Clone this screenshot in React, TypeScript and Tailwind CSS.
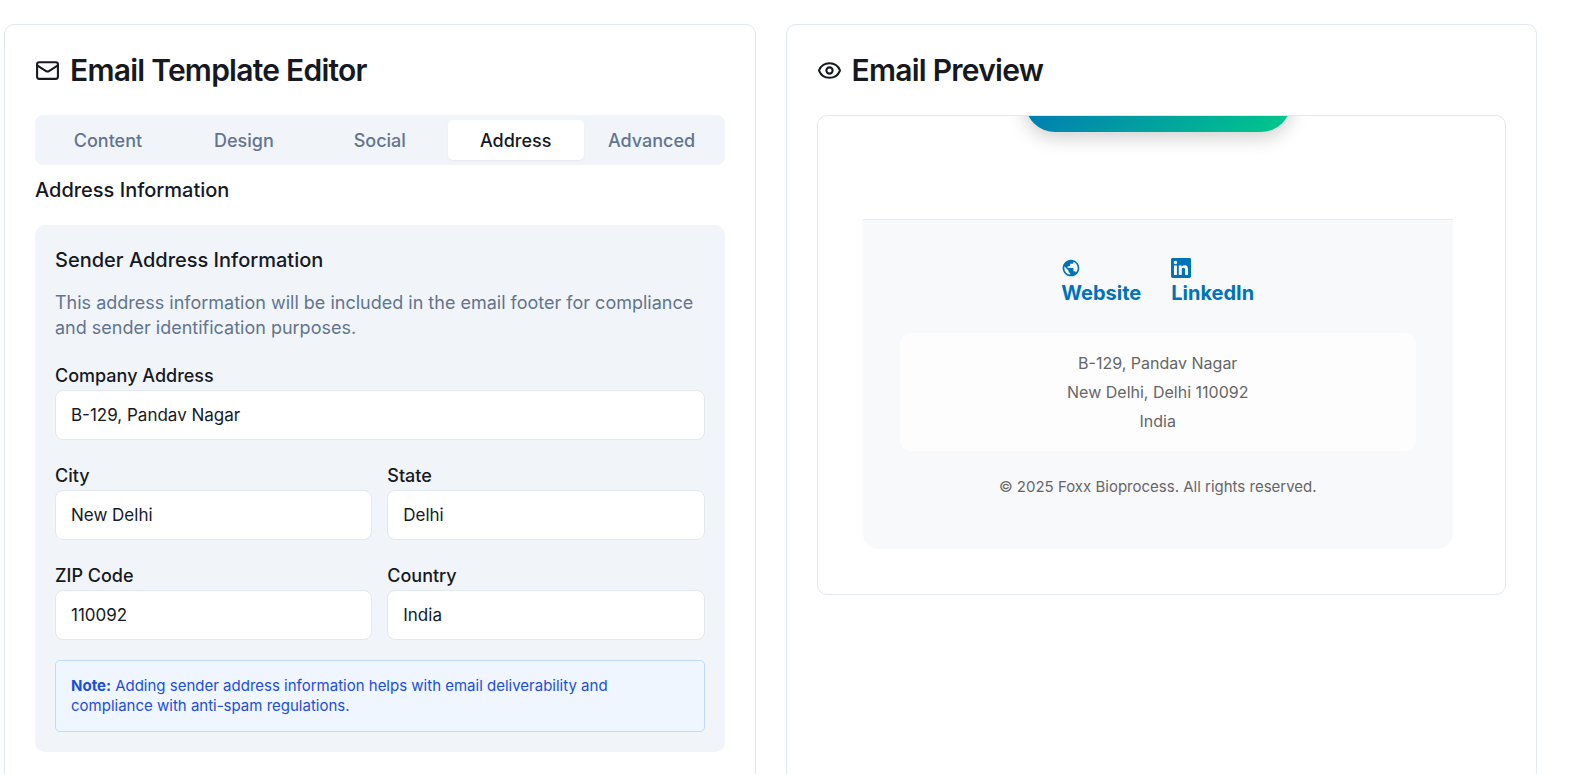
import { useState } from "react";
import type { ReactNode } from "react";
import { Eye, Mail } from "lucide-react";
import { MdPublic } from "react-icons/md";

const tabs = ["Content", "Design", "Social", "Address", "Advanced"];

function Card({ title, icon, children }: { title: string; icon: ReactNode; children: ReactNode }) {
  return (
    <section className="min-w-0 rounded-[10px] border border-slate-200 bg-white p-[30px]">
      <h2 className="mb-[30px] flex items-center gap-[10px] text-3xl leading-[30px] font-semibold tracking-tight">
        {icon}
        {title}
      </h2>
      {children}
    </section>
  );
}

function Field({ id, label, value }: { id: string; label: string; value: string }) {
  return (
    <div className="flex flex-col">
      <label htmlFor={id} className="pt-0.5 text-lg leading-7 font-medium">
        {label}
      </label>
      <input
        id={id}
        defaultValue={value}
        className="h-[50px] w-full rounded-lg border border-slate-200 bg-white px-[15px] text-[17px]"
      />
    </div>
  );
}

function LinkedInLogo() {
  return (
    <svg viewBox="0 0 24 24" className="size-5" fill="currentColor" aria-hidden="true">
      <path d="M20.447 20.452h-3.554v-5.569c0-1.328-.027-3.037-1.852-3.037-1.853 0-2.136 1.445-2.136 2.939v5.667H9.351V9h3.414v1.561h.046c.477-.9 1.637-1.85 3.37-1.85 3.601 0 4.267 2.37 4.267 5.455v6.286zM5.337 7.433a2.062 2.062 0 0 1-2.063-2.065 2.064 2.064 0 1 1 2.063 2.065zm1.782 13.019H3.555V9h3.564v11.452zM22.225 0H1.771C.792 0 0 .774 0 1.729v20.542C0 23.227.792 24 1.771 24h20.451C23.2 24 24 23.227 24 22.271V1.729C24 .774 23.2 0 22.222 0h.003z" />
    </svg>
  );
}

export default function App() {
  const [active, setActive] = useState("Address");

  return (
    <main className="grid min-h-screen grid-cols-2 gap-[30px] bg-white pt-6 pr-9 pb-6 pl-1 font-['Inter',sans-serif] text-[#16191f]">
      <Card title="Email Template Editor" icon={<Mail className="size-[25px]" />}>
        <div role="tablist" className="grid grid-cols-5 rounded-lg bg-slate-100 p-[5px]">
          {tabs.map((tab) => (
            <button
              key={tab}
              role="tab"
              aria-selected={tab === active}
              onClick={() => setActive(tab)}
              className={
                tab === active
                  ? "h-10 rounded-[5px] bg-white pt-0.5 text-lg font-medium shadow-xs"
                  : "h-10 rounded-[5px] pt-0.5 text-lg font-medium text-slate-500"
              }
            >
              {tab}
            </button>
          ))}
        </div>

        <h3 className="mt-[10px] mb-5 text-xl leading-[30px] font-medium">Address Information</h3>

        <div className="flex flex-col gap-5 rounded-[10px] bg-slate-100 p-5">
          <div>
            <h4 className="mb-[15px] text-xl leading-[30px] font-medium">Sender Address Information</h4>
            <p className="text-lg leading-[25px] text-slate-500">
              This address information will be included in the email footer for compliance and sender identification
              purposes.
            </p>
          </div>
          <Field id="company-address" label="Company Address" value="B-129, Pandav Nagar" />
          <div className="grid grid-cols-2 gap-x-[15px] gap-y-5">
            <Field id="city" label="City" value="New Delhi" />
            <Field id="state" label="State" value="Delhi" />
            <Field id="zip" label="ZIP Code" value="110092" />
            <Field id="country" label="Country" value="India" />
          </div>
          <p className="rounded-[5px] border border-[#bfdbfe] bg-[#eff6ff] p-[15px] text-[15px] leading-5 text-[#1d4ed8]">
            <strong>Note:</strong> Adding sender address information helps with email deliverability and compliance
            with anti-spam regulations.
          </p>
        </div>
      </Card>

      <Card title="Email Preview" icon={<Eye className="size-[25px]" />}>
        <div className="overflow-hidden rounded-[10px] border border-slate-200 pr-[52px] pb-[45px] pl-[45px]">
          <div className="flex justify-center pb-[87px]">
            <a
              href="#"
              aria-label="Open link"
              className="-mt-11 block h-[60px] w-[266px] rounded-full bg-[linear-gradient(135deg,#0072b8,#00c98a)] shadow-[0_5px_19px_rgba(0,0,0,0.2)]"
            />
          </div>
          <footer className="rounded-b-[15px] border-t border-[#e9ecef] bg-[#f8f9fb] px-[37px] pt-[38px] pb-[50px] text-center text-[#666666]">
            <nav className="mb-[25px] flex justify-center gap-[30px] text-left text-xl leading-[30px] font-bold text-[#0072b8]">
              <a href="#" className="flex flex-col">
                <MdPublic className="size-5" />
                Website
              </a>
              <a href="#" className="flex flex-col">
                <LinkedInLogo />
                LinkedIn
              </a>
            </nav>
            <address className="rounded-[10px] bg-[#fdfdfe] pt-4 pb-[15px] text-base leading-[29px] not-italic">
              B-129, Pandav Nagar
              <br />
              New Delhi, Delhi 110092
              <br />
              India
            </address>
            <p className="mt-6 text-[15px] leading-6">© 2025 Foxx Bioprocess. All rights reserved.</p>
          </footer>
        </div>
      </Card>
    </main>
  );
}
